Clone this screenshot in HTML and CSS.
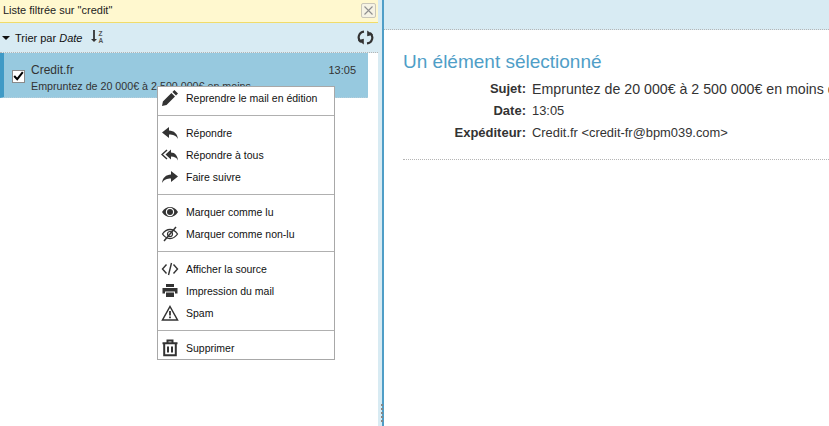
FILE: index.html
```html
<!DOCTYPE html>
<html lang="fr">
<head>
<meta charset="utf-8">
<title>Messagerie</title>
<link rel="stylesheet" href="styles.css">
</head>
<body>
<div class="app">
  <aside class="left">
    <div class="banner">
      <span>Liste filtrée sur "credit"</span>
      <button class="close" aria-label="Fermer"><svg width="11" height="11" viewBox="0 0 11 11"><path d="M1.500 1.500l8 8M9.500 1.500l-8 8" stroke="#8f8f8f" stroke-width="1.100" fill="none"/></svg></button>
    </div>
    <div class="sortbar">
      <span class="caret"></span>
      <span class="sortlabel">Trier par <em>Date</em></span>
      <span class="sorticon">
        <svg width="6" height="12" viewBox="0 0 6 12"><path d="M3 0v9" stroke="#333" stroke-width="1.800" fill="none"/><path d="M0 9h6l-3 3z" fill="#333"/></svg>
        <span class="za"><span>Z</span><span>A</span></span>
      </span>
      <svg class="refresh" width="17" height="17" viewBox="0 0 17 17"><path d="M7 2.600A5.800 5.800 0 0 0 4 13" fill="none" stroke="#333" stroke-width="2.200"/><path d="M1 11.200L6.800 9.800 6.800 15.600z" fill="#333"/><path d="M10 14.400A5.800 5.800 0 0 0 13 4" fill="none" stroke="#333" stroke-width="2.200"/><path d="M16 5.800L10.200 7.200 10.200 1.400z" fill="#333"/></svg>
    </div>
    <div class="list">
      <div class="mail">
        <span class="check"><svg width="11" height="10" viewBox="0 0 11 10"><path d="M1.200 5l3 3.200L9.800 1.200" stroke="#000" stroke-width="2" fill="none"/></svg></span>
        <div class="mailbody">
          <div class="mailtop"><span class="from">Credit.fr</span><span class="time">13:05</span></div>
          <div class="subject">Empruntez de 20 000€ à 2 500 000€ en moins</div>
        </div>
      </div>
    </div>
    <ul class="menu">
      <li class="item"><svg class="ico" viewBox="0 0 18 18"><path d="M13.400 1l3.600 3.600-2 2L11.400 3zM10.400 4l3.600 3.600L5.500 16.100 1 17l.9-4.500z" fill="#333"/></svg>Reprendre le mail en édition</li>
      <li class="sep"></li>
      <li class="item"><svg class="ico" viewBox="0 0 18 18"><path d="M8 3L1 8.500 8 14v-3.500c4 0 7 1 9 4.500-.5-5-4-8.500-9-8.500z" fill="#333"/></svg>Répondre</li>
      <li class="item"><svg class="ico" viewBox="0 0 18 18"><path d="M10 3.500L4.500 8.500 10 13.500v-3c3.500 0 5.500 1 7 4-.3-4.500-3-8-7-8z" fill="#333"/><path d="M6 4L1 8.500 6 13" fill="none" stroke="#333" stroke-width="1.500"/></svg>Répondre à tous</li>
      <li class="item"><svg class="ico" viewBox="0 0 18 18"><path d="M10 3l7 5.500L10 14v-3.500c-4 0-7 1-9 4.500.5-5 4-8.500 9-8.500z" fill="#333"/></svg>Faire suivre</li>
      <li class="sep"></li>
      <li class="item"><svg class="ico" viewBox="0 0 18 18"><path d="M1 9c2-3.500 5-5 8-5s6 1.500 8 5c-2 3.500-5 5-8 5s-6-1.500-8-5z" fill="#333"/><circle cx="9" cy="9" r="4.200" fill="#fff"/><circle cx="9" cy="9" r="3" fill="#333"/></svg>Marquer comme lu</li>
      <li class="item"><svg class="ico" viewBox="0 0 18 18"><path d="M1.500 9c2-3 4.700-4.500 7.500-4.500S14.500 6 16.500 9c-2 3-4.700 4.500-7.500 4.500S3.500 12 1.500 9z" fill="none" stroke="#333" stroke-width="1.300"/><circle cx="9" cy="9" r="2.500" fill="none" stroke="#333" stroke-width="1.200"/><path d="M3 16L15 2" stroke="#333" stroke-width="1.500"/></svg>Marquer comme non-lu</li>
      <li class="sep"></li>
      <li class="item"><svg class="ico" viewBox="0 0 18 18"><path d="M5.500 4.500L1.500 9l4 4.500M12.500 4.500l4 4.500-4 4.500M10.500 3L7.500 15" fill="none" stroke="#333" stroke-width="1.400"/></svg>Afficher la source</li>
      <li class="item"><svg class="ico" viewBox="0 0 18 18"><path d="M5 2h8v3H5zM1.500 6h15v5.500h-2.500V9.500H4v2H1.500zM5 10.500h8V15H5z" fill="#333"/></svg>Impression du mail</li>
      <li class="item"><svg class="ico" viewBox="0 0 18 18"><path d="M9 2.500L16.500 16h-15z" fill="none" stroke="#333" stroke-width="1.500"/><path d="M9 7v4.500M9 12.500v1.800" stroke="#333" stroke-width="1.800"/></svg>Spam</li>
      <li class="sep"></li>
      <li class="item"><svg class="ico" viewBox="0 0 18 18"><path d="M6.500 3.500V1.500h5v2M1.500 4.200h15M3.200 4.500V16.200h11.600V4.500M7 7.500v6M11 7.500v6" fill="none" stroke="#333" stroke-width="2"/></svg>Supprimer</li>
    </ul>
  </aside>
  <div class="splitter"><span class="grip"></span></div>
  <main class="right">
    <div class="toolbar"></div>
    <section class="detail">
      <h1>Un élément sélectionné</h1>
      <dl class="meta">
        <dt>Sujet:</dt><dd class="subj">Empruntez de 20 000€ à 2 500 000€ en moins de</dd>
        <dt>Date:</dt><dd>13:05</dd>
        <dt>Expéditeur:</dt><dd>Credit.fr &lt;credit-fr@bpm039.com&gt;</dd>
      </dl>
      <div class="rule"></div>
    </section>
  </main>
</div>
</body>
</html>
```
FILE: styles.css
```css
* { box-sizing: border-box; }
html, body { margin: 0; height: 100%; overflow: hidden; background: #fff; }
body { font-family: "Liberation Sans", Arial, sans-serif; font-size: 11px; color: #333; }
.app { display: flex; width: 829px; height: 426px; overflow: hidden; }
.left { position: relative; width: 378px; flex: none; }
.banner { height: 23px; background: #fff8cf; border-bottom: 1px solid #f0dc6a; display: flex; align-items: center; justify-content: space-between; padding: 0 2px 2px 3px; color: #222; }
.close { width: 15px; height: 15px; padding: 0; background: #f6f3e4; border: 1px solid #c9c6b8; border-radius: 2px; display: flex; align-items: center; justify-content: center; }
.sortbar { height: 30px; background: #d8ebf3; border-bottom: 1px dotted #b5b5b5; display: flex; align-items: center; padding: 0 4px 0 2px; color: #111; }
.caret { width: 0; height: 0; border-left: 4px solid transparent; border-right: 4px solid transparent; border-top: 4px solid #111; }
.sortlabel { margin-left: 5px; }
.sorticon { display: flex; align-items: flex-start; margin-left: 9px; gap: 1px; margin-top: -1px; }
.za { display: flex; flex-direction: column; font-size: 6.500px; line-height: 7px; font-weight: bold; color: #555; }
.refresh { margin-left: auto; margin-top: -1px; }
.list { width: 368px; }
.mail { height: 45px; background: #97c9df; border-left: 4px solid #3f9ac6; border-bottom: 1px dotted #b5cfdc; display: flex; align-items: center; padding: 0 12px 0 8px; }
.check { width: 13px; height: 13px; background: #fff; border: 1px solid #8a8a8a; display: flex; align-items: center; justify-content: center; margin-top: 2px; }
.mailbody { flex: 1; margin-left: 6px; padding-top: 4px; }
.mailtop { display: flex; justify-content: space-between; align-items: center; }
.from { font-size: 12px; color: #333; }
.time { font-size: 11px; color: #333; }
.subject { margin-top: 3px; color: #333; white-space: nowrap; font-size: 10.700px; }
.menu { position: absolute; left: 157px; top: 86px; width: 178px; height: 274px; margin: 0; padding: 0; list-style: none; background: #fff; border: 1px solid #a8a8a8; color: #111; font-size: 10.500px; }
.item { height: 22px; display: flex; align-items: center; padding-left: 3px; }
.ico { width: 18px; height: 18px; margin-right: 7px; flex: none; }
.sep { height: 1px; background: #b0b0b0; margin: 6px 0; }
.splitter { width: 6px; flex: none; background: #d8ebf3; border-right: 2px solid #4f9ec7; position: relative; }
.grip { position: absolute; left: 3px; bottom: 4px; width: 2px; height: 18px; background: repeating-linear-gradient(#888 0 2px, transparent 2px 4px); }
.right { flex: 1; min-width: 0; overflow: hidden; }
.toolbar { height: 30px; background: #d8ebf3; border-bottom: 1px dotted #b5b5b5; }
.detail { padding: 20px 0 0 19px; }
h1 { margin: 0; font-size: 19px; font-weight: normal; color: #4f9ec7; line-height: 24px; }
.meta { display: grid; grid-template-columns: 123px 1fr; column-gap: 6px; margin: 4px 0 0; font-size: 13px; line-height: 22px; white-space: nowrap; }
.meta dt { font-weight: bold; text-align: right; }
.meta dd { margin: 0; font-size: 12.900px; }
.meta .subj { font-size: 14.200px; }
.rule { border-top: 1px dotted #b5b5b5; margin-top: 15px; }
```
